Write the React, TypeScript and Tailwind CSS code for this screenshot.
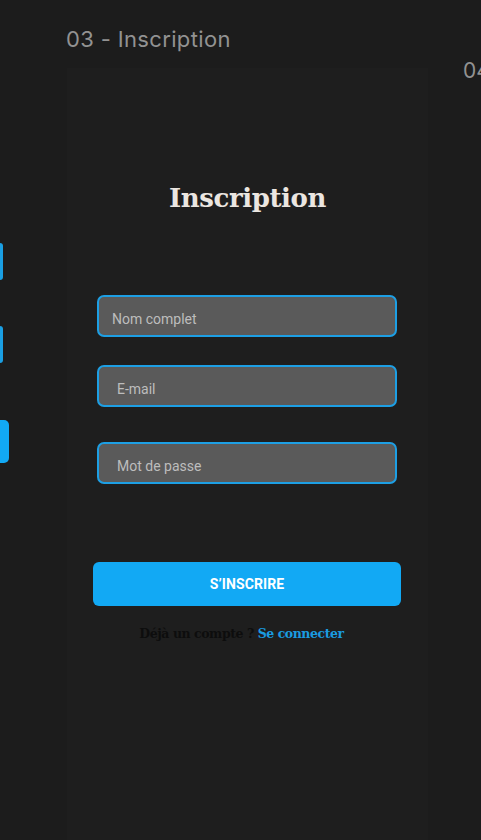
const fields = [
  { placeholder: "Nom complet", pad: "pl-[13px]", mt: "mt-[81px]" },
  { placeholder: "E-mail", pad: "pl-[18px]", mt: "mt-[28px]" },
  { placeholder: "Mot de passe", pad: "pl-[18px]", mt: "mt-[35px]" },
]

export default function App() {
  return (
    <div className="w-[481px] h-[840px] overflow-hidden bg-[#1c1c1c] flex font-['Inter',sans-serif]">
      {/* previous frame, cut off at the left edge */}
      <div className="w-[10px] shrink-0 flex flex-col">
        <div className="mt-[243px] h-[37px] w-[3px] rounded-r-[3px] bg-[#1a9fe3]" />
        <div className="mt-[46px] h-[37px] w-[3px] rounded-r-[3px] bg-[#1a9fe3]" />
        <div className="mt-[57px] h-[43px] w-[9px] rounded-r-[5px] bg-[#12a9f4]" />
      </div>

      {/* 03 - Inscription */}
      <div className="ml-[57px] w-[361px] shrink-0 flex flex-col">
        <div className="-ml-[1px] h-[68px] pt-[25px] text-[22px] leading-[28px] text-[#929292] tracking-[0.35px]">
          03 - Inscription
        </div>
        <div className="flex-1 bg-[#1e1e1e] flex flex-col">
          <h1 className="mt-[114px] text-center text-[26px] leading-[32px] font-bold text-[#ebe6e1] tracking-[-0.4px] font-['DejaVu_Serif',serif]">
            Inscription
          </h1>

          {fields.map((f) => (
            <input
              key={f.placeholder}
              placeholder={f.placeholder}
              className={`${f.mt} ml-[30px] w-[300px] h-[42px] rounded-[7px] border-2 border-[#1d9fe4] bg-[#5a5a5a] ${f.pad} pt-[5px] text-[14px] text-white placeholder:text-[#bdbdbd] outline-none font-['Roboto',sans-serif]`}
            />
          ))}

          <button className="mt-[78px] ml-[26px] w-[308px] h-[44px] rounded-[6px] bg-[#12a9f4] text-white text-[14px] font-bold font-['Roboto',sans-serif] tracking-[0.1px]">
            S’INSCRIRE
          </button>

          <p className="mt-[20px] pr-[12px] text-center text-[12.5px] leading-[16px] font-bold font-['DejaVu_Serif',serif] tracking-[-0.45px]">
            <span className="text-[#0d0d0d]">Déjà un compte ? </span>
            <span className="text-[#1a9be0]">Se connecter</span>
          </p>
        </div>
      </div>

      {/* next frame label, cut off at the right edge */}
      <div className="ml-[35px] pt-[57px] text-[21px] leading-[28px] text-[#929292] whitespace-nowrap">
        04
      </div>
    </div>
  )
}
